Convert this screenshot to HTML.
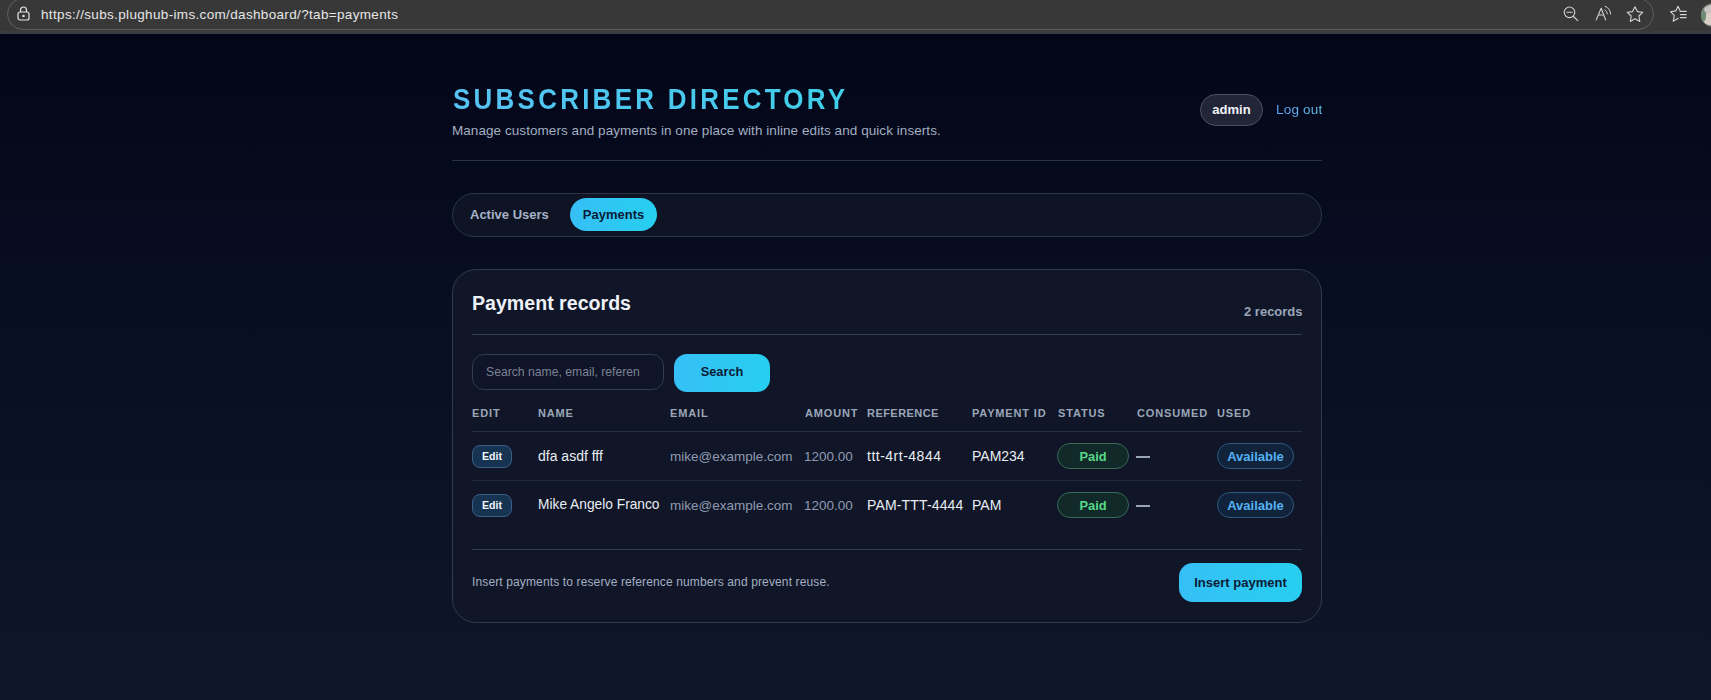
<!DOCTYPE html>
<html><head><meta charset="utf-8">
<style>
*{box-sizing:border-box;margin:0;padding:0}
html,body{width:1711px;height:700px;overflow:hidden}
body{font-family:"Liberation Sans",sans-serif;background:linear-gradient(180deg,#020617 0px,#020617 34px,#070c20 250px,#0b1125 450px,#0f1629 700px);position:relative;color:#e2e8f0}
.bar{position:absolute;left:0;top:0;width:1711px;height:34px;background:#383838;border-bottom:3px solid #3b3d42}
.addr{position:absolute;left:7px;top:-2px;width:1647px;height:32px;border:1px solid #5f5f5f;border-radius:16px}
.url{position:absolute;left:41px;top:7px;font-size:13.5px;color:#e6e6e6;letter-spacing:0.34px}
.abs{position:absolute}
h1{position:absolute;left:453px;top:83px;font-size:29.5px;font-weight:700;letter-spacing:3.7px;transform:scaleX(0.88);transform-origin:0 0;color:#4cc6f0;background:linear-gradient(90deg,#58c2f4 0%,#3fcfe9 100%);-webkit-background-clip:text;background-clip:text;-webkit-text-fill-color:transparent;white-space:nowrap;line-height:32px}
.sub{position:absolute;left:452px;top:123px;font-size:13.5px;letter-spacing:0.06px;color:#a3afc2;white-space:nowrap}
.hr{position:absolute;left:452px;width:870px;height:1px;background:#2a3242}
.pill-admin{position:absolute;left:1200px;top:94px;width:63px;height:32px;border:1px solid #4a4f60;border-radius:16px;background:#222538;color:#f1f5f9;font-weight:700;font-size:13px;text-align:center;line-height:30px}
.logout{position:absolute;left:1276px;top:102px;font-size:13.5px;color:#78b8ee;font-weight:400;letter-spacing:0.2px;background:linear-gradient(90deg,#5fa4f6,#66c6ea);-webkit-background-clip:text;background-clip:text;-webkit-text-fill-color:transparent}
.tabs{position:absolute;left:452px;top:193px;width:870px;height:44px;border:1px solid #2c3445;border-radius:22px;background:#0e1424}
.tab1{position:absolute;left:470px;top:207px;font-size:13px;font-weight:700;color:#a6b3c6}
.tab2{position:absolute;left:570px;top:198px;width:87px;height:33px;border-radius:17px;background:linear-gradient(90deg,#36bff6,#27cfef);color:#0b1a36;font-size:13px;font-weight:700;text-align:center;line-height:33px}
.card{position:absolute;left:452px;top:269px;width:870px;height:354px;border:1px solid #313a4c;border-radius:24px;background:#101628}
.title{position:absolute;left:472px;top:292px;font-size:19.6px;font-weight:700;color:#eef2f7;white-space:nowrap}
.count{position:absolute;left:1244px;top:304px;font-size:13px;font-weight:700;color:#9aa6b8}
.search{position:absolute;left:472px;top:354px;width:192px;height:36px;border:1px solid #353c50;border-radius:12px;background:#0f1428}
.ph{position:absolute;left:486px;top:365px;font-size:12.2px;color:#7b8393;white-space:nowrap}
.sbtn{position:absolute;left:674px;top:354px;width:96px;height:38px;border-radius:13px;background:linear-gradient(90deg,#36bff6,#27cfef);color:#0b1a36;font-size:12.8px;font-weight:700;text-align:center;line-height:36.5px}
.th{position:absolute;top:407px;font-size:11px;font-weight:700;letter-spacing:0.85px;color:#9aa6b8;white-space:nowrap}
.td{position:absolute;font-size:13.5px;color:#e8edf3;white-space:nowrap}
.em{color:#8e9ab0}
.big{font-size:14px}
.edit{position:absolute;left:472px;width:40px;height:23px;border:1px solid #3a5e86;border-radius:8px;background:#163352;color:#f1f5f9;font-size:10.6px;font-weight:700;text-align:center;line-height:21px}
.paid{position:absolute;left:1057px;width:72px;height:26px;border:1px solid #386a57;border-radius:13px;background:#112a29;color:#58d98a;font-size:12.8px;font-weight:700;text-align:center;line-height:25.5px}
.avail{position:absolute;left:1217px;width:77px;height:26px;border:1px solid #2d5880;border-radius:13px;background:#10233b;color:#55b1f3;font-size:13px;font-weight:700;text-align:center;line-height:25.5px}
.dash{position:absolute;left:1136px;width:14px;height:2px;background:#9aa5b5}
.foot{position:absolute;left:472px;top:575px;font-size:12px;letter-spacing:0.13px;color:#a3afc2;white-space:nowrap}
.ibtn{position:absolute;left:1179px;top:563px;width:123px;height:39px;border-radius:14px;background:linear-gradient(90deg,#36bff6,#27cfef);color:#0b1a36;font-size:13px;font-weight:700;text-align:center;line-height:39px}
</style></head><body>
<div class="bar">
  <div class="addr"></div>
  <svg class="abs" style="left:17px;top:6px" width="13" height="15" viewBox="0 0 13 15" fill="none" stroke="#e6e6e6" stroke-width="1.2"><path d="M3.5 6V4a3 3 0 0 1 6 0v2"/><rect x="1" y="6" width="11" height="8" rx="2"/><rect x="6" y="9.5" width="1" height="1" fill="#e6e6e6"/></svg>
  <div class="url">https://subs.plughub-ims.com/dashboard/?tab=payments</div>
  <svg class="abs" style="left:0;top:0" width="1711" height="34" viewBox="0 0 1711 34" fill="none" stroke="#d4d4d4" stroke-width="1.1" stroke-linecap="round" stroke-linejoin="round">
    <circle cx="1569.5" cy="12.3" r="5.3"/>
    <path d="M1566.8 12.3h5.4M1573.5 16.5l4.3 4.2"/>
    <path d="M1596.2 19.9L1601.2 8.2L1605.6 19.9M1598.3 15h5.6"/>
    <path d="M1605.2 6.3A9 9 0 0 1 1610.7 14M1604.8 9.8A5.6 5.6 0 0 1 1607.4 13.8" stroke-width="1"/>
    <path d="M1635 6.7L1637.4 11.6L1642.7 12.3L1638.9 16L1639.8 21.4L1635 18.8L1630.3 21.4L1631.2 16L1627.3 12.3L1632.6 11.6Z"/>
    <path d="M1678 6.3L1680.2 10.9M1678 6.3L1675.8 10.9L1670.4 11.7L1674.3 15.4L1673.2 21.3L1678.3 18.3M1680.4 11.4h5.8M1680.4 14.6h5.8M1680.4 17.6h5.8"/>
  </svg>
  <svg class="abs" style="left:1690px;top:2px" width="21" height="26" viewBox="0 0 21 26"><defs><clipPath id="av"><circle cx="23" cy="13" r="12"/></clipPath></defs><g clip-path="url(#av)"><rect x="0" y="0" width="30" height="26" fill="#7a8a7c"/><ellipse cx="22" cy="8" rx="8" ry="5" fill="#c9c4c4"/><ellipse cx="20" cy="17" rx="7" ry="6" fill="#d8cfc6"/><ellipse cx="13" cy="14" rx="3" ry="6" fill="#6e8a72"/></g></svg>
</div>

<h1>SUBSCRIBER DIRECTORY</h1>
<div class="sub">Manage customers and payments in one place with inline edits and quick inserts.</div>
<div class="pill-admin">admin</div>
<div class="logout">Log out</div>
<div class="hr" style="top:160px"></div>

<div class="tabs"></div>
<div class="tab1">Active Users</div>
<div class="tab2">Payments</div>

<div class="card"></div>
<div class="title">Payment records</div>
<div class="count">2 records</div>
<div class="hr" style="left:472px;width:830px;top:334px;background:#363e50"></div>
<div class="search"></div>
<div class="ph">Search name, email, referen</div>
<div class="sbtn">Search</div>

<div class="th" style="left:472px">EDIT</div>
<div class="th" style="left:538px">NAME</div>
<div class="th" style="left:670px">EMAIL</div>
<div class="th" style="left:805px">AMOUNT</div>
<div class="th" style="left:867px;letter-spacing:0.45px">REFERENCE</div>
<div class="th" style="left:972px">PAYMENT ID</div>
<div class="th" style="left:1058px">STATUS</div>
<div class="th" style="left:1137px">CONSUMED</div>
<div class="th" style="left:1217px">USED</div>
<div class="hr" style="left:472px;width:830px;top:431px;background:#263043"></div>

<div class="edit" style="top:445px">Edit</div>
<div class="td big" style="left:538px;top:448px">dfa asdf fff</div>
<div class="td em" style="left:670px;top:449px">mike@example.com</div>
<div class="td em" style="left:804px;top:449px">1200.00</div>
<div class="td big" style="left:867px;top:448px;letter-spacing:0.5px">ttt-4rt-4844</div>
<div class="td big" style="left:972px;top:448px">PAM234</div>
<div class="paid" style="top:443px">Paid</div>
<div class="dash" style="top:456px"></div>
<div class="avail" style="top:443px">Available</div>
<div class="hr" style="left:472px;width:830px;top:480px;background:#222b3b"></div>

<div class="edit" style="top:494px">Edit</div>
<div class="td big" style="left:538px;top:497px;font-size:13.75px">Mike Angelo Franco</div>
<div class="td em" style="left:670px;top:498px">mike@example.com</div>
<div class="td em" style="left:804px;top:498px">1200.00</div>
<div class="td big" style="left:867px;top:497px;letter-spacing:0.15px">PAM-TTT-4444</div>
<div class="td big" style="left:972px;top:497px">PAM</div>
<div class="paid" style="top:492px">Paid</div>
<div class="dash" style="top:505px"></div>
<div class="avail" style="top:492px">Available</div>

<div class="hr" style="left:472px;width:830px;top:549px;background:#323a4c"></div>
<div class="foot">Insert payments to reserve reference numbers and prevent reuse.</div>
<div class="ibtn">Insert payment</div>
</body></html>
